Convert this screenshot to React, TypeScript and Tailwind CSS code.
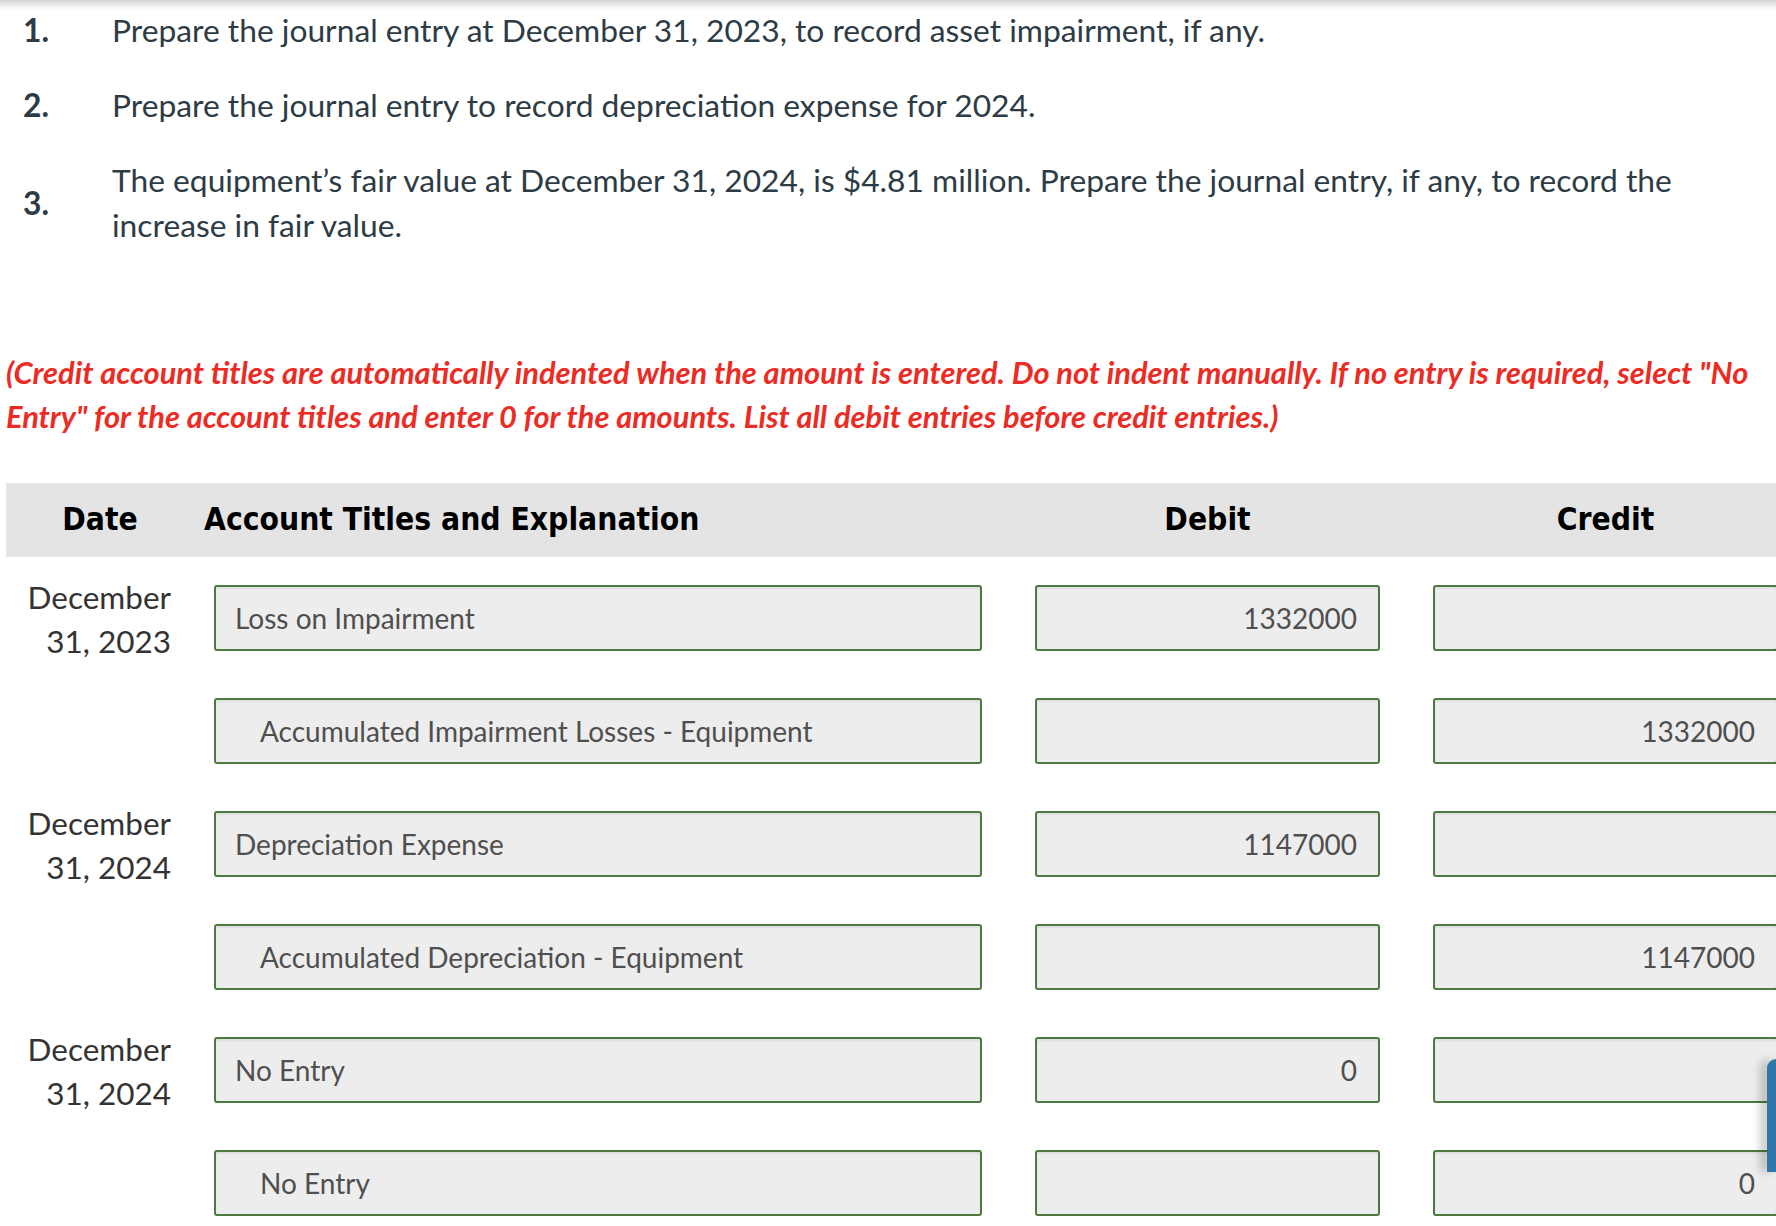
const font = { fontFamily: "Lato, 'Noto Sans', sans-serif" };
const headFont = { fontFamily: "'DejaVu Sans Condensed', 'DejaVu Sans', sans-serif" };

type Row = {
  date?: [string, string];
  account: string;
  indent: boolean;
  debit: string;
  credit: string;
};

const rows: Row[] = [
  { date: ["December", "31, 2023"], account: "Loss on Impairment", indent: false, debit: "1332000", credit: "" },
  { account: "Accumulated Impairment Losses - Equipment", indent: true, debit: "", credit: "1332000" },
  { date: ["December", "31, 2024"], account: "Depreciation Expense", indent: false, debit: "1147000", credit: "" },
  { account: "Accumulated Depreciation - Equipment", indent: true, debit: "", credit: "1147000" },
  { date: ["December", "31, 2024"], account: "No Entry", indent: false, debit: "0", credit: "" },
  { account: "No Entry", indent: true, debit: "", credit: "0" },
];

const questions = [
  { n: "1.", text: "Prepare the journal entry at December 31, 2023, to record asset impairment, if any." },
  { n: "2.", text: "Prepare the journal entry to record depreciation expense for 2024." },
  {
    n: "3.",
    text: "The equipment’s fair value at December 31, 2024, is $4.81 million. Prepare the journal entry, if any, to record the increase in fair value.",
  },
];

function Field({ value, right, indent, width }: { value: string; right?: boolean; indent?: boolean; width: string }) {
  return (
    <div
      className={`${width} h-[66px] shrink-0 flex items-center rounded-[3px] border-2 border-[#4d7a3e] bg-[#ededed] shadow-[inset_0_2px_2px_rgba(0,0,0,0.06)] text-[28px] text-[#4f4f4f] ${
        right ? "justify-end pr-[21px]" : indent ? "pl-[44px]" : "pl-[19px]"
      }`}
    >
      {value}
    </div>
  );
}

export default function App() {
  return (
    <div style={font} className="relative w-screen h-screen overflow-hidden bg-white text-[#2d3b45]">
      <div className="fixed top-0 left-0 right-0 h-[10px] bg-gradient-to-b from-[#d4d4d4] to-white/0" />

      <ol className="pt-[8px] flex flex-col gap-[30px]">
        {questions.map((q) => (
          <li key={q.n} className="flex items-center text-[31.75px] leading-[45px]">
            <span className="w-[112px] pl-[23px] shrink-0 font-bold">{q.n}</span>
            <span className="pr-[60px]">{q.text}</span>
          </li>
        ))}
      </ol>

      <p className="mt-[103px] pl-[6px] pr-[8px] text-[30.8px] leading-[44px] italic font-bold text-[#ec2b24]">
        (Credit account titles are automatically indented when the amount is entered. Do not indent manually. If no
        entry is required, select "No Entry" for the account titles and enter 0 for the amounts. List all debit entries
        before credit entries.)
      </p>

      <div className="mt-[44px] ml-[6px]">
        <div style={headFont} className="h-[74px] flex items-center bg-[#e4e4e4] text-[31.5px] font-bold text-black">
          <div className="w-[198px] shrink-0 pr-[10px] text-center">Date</div>
          <div className="w-[831px] shrink-0">Account Titles and Explanation</div>
          <div className="w-[345px] shrink-0 text-center">Debit</div>
          <div className="w-[53px] shrink-0" />
          <div className="w-[345px] shrink-0 text-center">Credit</div>
        </div>

        <div className="pt-[28px] flex flex-col gap-[47px]">
          {rows.map((r, i) => (
            <div key={i} className="h-[66px] flex items-start">
              <div className="w-[208px] shrink-0 pr-[43px] -mt-[10px] text-right text-[31.5px] leading-[44px] text-[#333]">
                {r.date && (
                  <>
                    <div>{r.date[0]}</div>
                    <div>{r.date[1]}</div>
                  </>
                )}
              </div>
              <Field width="w-[768px]" value={r.account} indent={r.indent} />
              <div className="w-[53px] shrink-0" />
              <Field width="w-[345px]" value={r.debit} right />
              <div className="w-[53px] shrink-0" />
              <Field width="w-[345px]" value={r.credit} right />
            </div>
          ))}
        </div>
      </div>

      <div className="fixed right-0 top-[1059px] w-[9px] h-[113px] rounded-tl-[10px] bg-[#3077a8] shadow-[-6px_0_10px_rgba(0,0,0,0.25)]" />
    </div>
  );
}
